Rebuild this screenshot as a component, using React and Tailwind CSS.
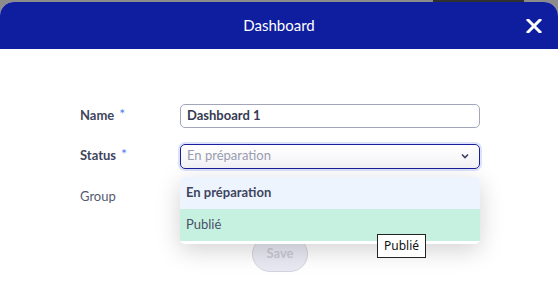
import React from "react";

export default function App() {
  return (
    <div className="relative w-[558px] h-[306px] overflow-hidden bg-[#8c8c8c] font-['Lato',sans-serif]">
      {/* backdrop strip */}
      <div className="flex h-[2px]">
        <div className="w-[433px]" />
        <div className="w-[91px] bg-[#2f2f2f]" />
      </div>
      {/* modal */}
      <div className="flex h-[304px] flex-col rounded-t-[14px] bg-white">
        <div className="flex h-[47px] items-center rounded-t-[14px] bg-[#0e1e9f] pr-[14px] pl-[34px]">
          <div className="flex-1 text-center text-[15px] text-white">Dashboard</div>
          <button className="flex h-[20px] w-[20px] items-center justify-center text-white">
            <svg width="16" height="14" viewBox="0 0 16 14">
              <path d="M2 1 L14 13 M14 1 L2 13" stroke="white" strokeWidth="3" strokeLinecap="square" />
            </svg>
          </button>
        </div>
        <div className="relative flex flex-col pt-[55px]">
          <div className="flex flex-col gap-[16px] pl-[80px]">
            <div className="flex h-[24px] items-center">
              <div className="flex w-[100px] items-center text-[13px] font-bold text-[#40455e]">
                Name<span className="ml-[5px] -mt-[6px] text-[14px] font-normal text-[#4f7cf6]">*</span>
              </div>
              <div className="flex h-[24px] w-[300px] items-center rounded-[5px] border border-[#a3a6b8] px-[6px] text-[13px] font-bold text-[#353a52]">
                Dashboard 1
              </div>
            </div>
            <div className="flex h-[24px] items-center">
              <div className="flex w-[100px] items-center text-[13px] font-bold text-[#40455e]">
                Status<span className="ml-[5px] -mt-[6px] text-[14px] font-normal text-[#4f7cf6]">*</span>
              </div>
              <div className="flex h-[25px] w-[300px] items-center justify-between rounded-[5px] border border-[#1a1f9a] bg-gradient-to-b from-white to-[#f3f3f6] px-[6px] text-[13px] text-[#9a9db0] shadow-[0_0_0_2px_rgba(120,140,240,0.25)]">
                <span>En préparation</span>
                <svg width="8" height="6" viewBox="0 0 8 6" className="mr-[4px]">
                  <path d="M1 1.5 L4 4.5 L7 1.5" fill="none" stroke="#3c4160" strokeWidth="1.6" />
                </svg>
              </div>
            </div>
            <div className="flex h-[25px] items-center">
              <div className="w-[100px] text-[13px] text-[#545970]">Group</div>
            </div>
          </div>
          <div className="mt-[27px] flex justify-center pl-[2px]">
            <button className="h-[36px] w-[56px] rounded-full border border-[#d4d4dc] bg-[#e9e9f3] text-[13px] font-bold text-[#c9c9d2]">
              Save
            </button>
          </div>

          {/* dropdown */}
          <div className="absolute top-[128px] left-[180px] w-[300px] overflow-hidden rounded-[5px] bg-white pb-[3px] shadow-[0_6px_24px_rgba(0,0,0,0.18)]">
            <div className="flex h-[32px] items-center bg-[#eef4fe] px-[6px] text-[13px] font-bold text-[#40455e]">
              En préparation
            </div>
            <div className="flex h-[32px] items-center bg-[#c6f1e0] px-[6px] text-[13px] text-[#4a5068]">
              Publié
            </div>
          </div>

          {/* tooltip */}
          <div className="absolute top-[185px] left-[377px] flex h-[24px] w-[49px] items-center justify-center border border-[#222] bg-white font-['Noto_Sans',sans-serif] text-[12px] text-[#111]">
            Publié
          </div>
        </div>
      </div>
    </div>
  );
}
